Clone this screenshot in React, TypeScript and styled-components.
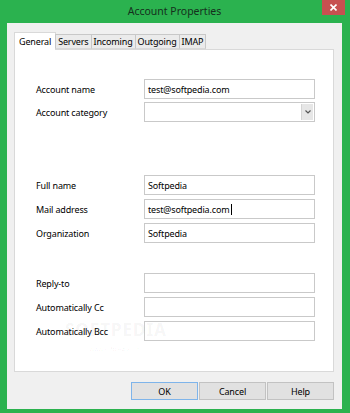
import React from 'react';
import styled, { createGlobalStyle } from 'styled-components';

const GlobalStyle = createGlobalStyle`
  html, body {
    margin: 0;
    padding: 0;
    background: #2bb24f;
  }
  body {
    font-family: "Noto Sans", "Open Sans", sans-serif;
    font-size: 9px;
    letter-spacing: -0.15px;
    color: #1a1a1a;
  }
`;

const Frame = styled.div`
  width: 350px;
  height: 413px;
  box-sizing: border-box;
  background: #2bb24f;
  padding: 0 8px 6px 7px;
  display: flex;
  flex-direction: column;
  position: relative;
`;

const TitleBar = styled.div`
  height: 22px;
  flex: none;
  display: flex;
  align-items: center;
  justify-content: center;
  font-size: 10.5px;
  letter-spacing: 0;
  color: #15301d;
  padding-bottom: 1px;
`;

const CloseButton = styled.div`
  position: absolute;
  top: 0;
  right: 5px;
  width: 23px;
  height: 15px;
  background: #c75050;
  display: flex;
  align-items: center;
  justify-content: center;

  svg {
    width: 7px;
    height: 7px;
  }
`;

const Body = styled.div`
  flex: 1;
  background: #f0f0f0;
  padding: 9px 8px 9px 7px;
  display: flex;
  flex-direction: column;
`;

const TabStrip = styled.div`
  display: flex;
  align-items: flex-end;
  height: 17px;
  position: relative;
  z-index: 1;
`;

const Tab = styled.div<{ $active?: boolean }>`
  box-sizing: border-box;
  height: ${(p) => (p.$active ? '18px' : '15px')};
  margin-bottom: ${(p) => (p.$active ? '-1px' : '0')};
  padding: 0 ${(p) => (p.$active ? '4px' : '2px')};
  background: ${(p) => (p.$active ? '#ffffff' : '#ebebeb')};
  border: 1px solid ${(p) => (p.$active ? '#d9d9d9' : '#c8c8c8')};
  border-bottom: ${(p) => (p.$active ? 'none' : '1px solid #d9d9d9')};
  margin-left: ${(p) => (p.$active ? '0' : '-1px')};
  display: flex;
  align-items: center;
  white-space: nowrap;
  color: #000;
`;

const Panel = styled.div`
  height: 323px;
  box-sizing: border-box;
  background: #ffffff;
  border: 1px solid #d9d9d9;
  padding: 29px 18px 0 21px;
  display: flex;
  flex-direction: column;
  position: relative;
`;

const Group = styled.div<{ $top: number; $gap: number }>`
  margin-top: ${(p) => p.$top}px;
  display: flex;
  flex-direction: column;
  gap: ${(p) => p.$gap}px;
`;

const Row = styled.div`
  display: grid;
  grid-template-columns: 108px 171px;
  align-items: center;
  height: 20px;
`;

const Label = styled.span`
  color: #000;
  white-space: nowrap;
`;

const Field = styled.div`
  box-sizing: border-box;
  height: 20px;
  border: 1px solid #c9c9c9;
  background: #fff;
  display: flex;
  align-items: center;
  padding: 0 3px;
  color: #000;
  white-space: nowrap;
`;

const Caret = styled.span`
  display: inline-block;
  width: 1px;
  height: 11px;
  background: #000;
  margin-left: 1px;
`;

const SelectBox = styled(Field)`
  justify-content: flex-end;
  padding: 1px;
`;

const DropButton = styled.div`
  box-sizing: border-box;
  width: 12px;
  height: 100%;
  background: #e6e6e6;
  border-left: 1px solid #d4d4d4;
  display: flex;
  align-items: center;
  justify-content: center;

  svg {
    width: 6px;
    height: 4px;
  }
`;

const Watermark = styled.div`
  position: absolute;
  left: 50px;
  top: 268px;
  display: flex;
  flex-direction: column;
  align-items: center;
  color: rgba(0, 0, 0, 0.05);
  pointer-events: none;

  b {
    font-size: 17px;
    letter-spacing: 1px;
    font-weight: 700;
  }

  span {
    font-size: 6px;
    margin-top: 4px;
  }
`;

const ButtonBar = styled.div`
  display: flex;
  justify-content: flex-end;
  gap: 1px;
  margin-top: 10px;
`;

const Button = styled.div<{ $default?: boolean }>`
  box-sizing: border-box;
  width: 67px;
  height: 18px;
  background: #e1e1e1;
  border: 1px solid ${(p) => (p.$default ? '#7eb4ea' : '#c2c2c2')};
  display: flex;
  align-items: center;
  justify-content: center;
  color: #000;
`;

const fields = [
  { top: 0, gap: 3, rows: [
    { label: 'Account name', value: 'test@softpedia.com' },
    { label: 'Account category', select: true },
  ] },
  { top: 53, gap: 4, rows: [
    { label: 'Full name', value: 'Softpedia' },
    { label: 'Mail address', value: 'test@softpedia.com', caret: true },
    { label: 'Organization', value: 'Softpedia' },
  ] },
  { top: 30, gap: 4, rows: [
    { label: 'Reply-to', value: '' },
    { label: 'Automatically Cc', value: '' },
    { label: 'Automatically Bcc', value: '' },
  ] },
];

const tabs = ['General', 'Servers', 'Incoming', 'Outgoing', 'IMAP'];

const App: React.FC = () => {
  return (
    <>
      <GlobalStyle />
      <Frame>
        <TitleBar>Account Properties</TitleBar>
        <CloseButton>
          <svg viewBox="0 0 7 7" fill="none" stroke="#fff" strokeWidth="1.6">
            <path d="M0.5 0.5l6 6M6.5 0.5l-6 6" />
          </svg>
        </CloseButton>
        <Body>
          <TabStrip>
            {tabs.map((t, i) => (
              <Tab key={t} $active={i === 0}>{t}</Tab>
            ))}
          </TabStrip>
          <Panel>
            {fields.map((g, gi) => (
              <Group key={gi} $top={g.top} $gap={g.gap}>
                {g.rows.map((r) => (
                  <Row key={r.label}>
                    <Label>{r.label}</Label>
                    {'select' in r && r.select ? (
                      <SelectBox>
                        <DropButton>
                          <svg viewBox="0 0 6 4" fill="none" stroke="#555" strokeWidth="1.2">
                            <path d="M0.5 0.5l2.5 2.5 2.5-2.5" />
                          </svg>
                        </DropButton>
                      </SelectBox>
                    ) : (
                      <Field>
                        {'value' in r ? r.value : ''}
                        {'caret' in r && r.caret ? <Caret /> : null}
                      </Field>
                    )}
                  </Row>
                ))}
              </Group>
            ))}
            <Watermark>
              <b>SOFTPEDIA</b>
              <span>www.softpedia.com</span>
            </Watermark>
          </Panel>
          <ButtonBar>
            <Button $default>OK</Button>
            <Button>Cancel</Button>
            <Button>Help</Button>
          </ButtonBar>
        </Body>
      </Frame>
    </>
  );
};

export default App;
